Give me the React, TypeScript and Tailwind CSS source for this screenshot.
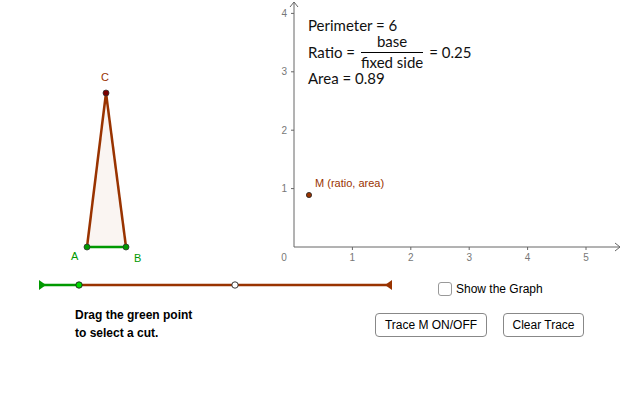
const BROWN = '#993300';
const GREEN = '#009900';
const AXIS = '#666666';

const ox = 294;
const oy = 247;
const unit = 58.4;

function Axes() {
  const xs = [1, 2, 3, 4, 5];
  const ys = [1, 2, 3, 4];
  return (
    <g>
      <line x1={ox} y1={oy} x2={620} y2={oy} stroke={AXIS} strokeWidth={1} />
      <line x1={ox} y1={oy} x2={ox} y2={2} stroke={AXIS} strokeWidth={1} />
      <polyline points="615,243 620,247 615,251" fill="none" stroke={AXIS} strokeWidth={1} />
      <polyline points="290,7 294,2 298,7" fill="none" stroke={AXIS} strokeWidth={1} />
      {xs.map((n) => (
        <g key={`x${n}`}>
          <line x1={ox + n * unit} y1={oy} x2={ox + n * unit} y2={oy + 3} stroke={AXIS} />
          <text x={ox + n * unit} y={261} fontSize={10} fill="#777" textAnchor="middle" fontFamily="Liberation Sans, sans-serif">
            {n}
          </text>
        </g>
      ))}
      {ys.map((n) => (
        <g key={`y${n}`}>
          <line x1={ox - 3} y1={oy - n * unit} x2={ox} y2={oy - n * unit} stroke={AXIS} />
          <text x={287} y={oy - n * unit + 3.5} fontSize={10} fill="#777" textAnchor="end" fontFamily="Liberation Sans, sans-serif">
            {n}
          </text>
        </g>
      ))}
      <text x={284} y={261} fontSize={10} fill="#777" textAnchor="middle" fontFamily="Liberation Sans, sans-serif">
        0
      </text>
    </g>
  );
}

function Triangle() {
  return (
    <g>
      <polygon points="87,247 126,247 106,93" fill={BROWN} fillOpacity={0.05} stroke="none" />
      <line x1={87} y1={247} x2={106} y2={93} stroke={BROWN} strokeWidth={2.5} />
      <line x1={126} y1={247} x2={106} y2={93} stroke={BROWN} strokeWidth={2.5} />
      <line x1={87} y1={247} x2={126} y2={247} stroke={GREEN} strokeWidth={2.5} />
      <circle cx={87} cy={247} r={3} fill={GREEN} stroke="#333" strokeWidth={0.8} />
      <circle cx={126} cy={247} r={3} fill={GREEN} stroke="#333" strokeWidth={0.8} />
      <circle cx={106} cy={93} r={3} fill="#7a0000" stroke="#333" strokeWidth={0.8} />
    </g>
  );
}

function Slider() {
  return (
    <g>
      <line x1={40} y1={285} x2={79} y2={285} stroke={GREEN} strokeWidth={2.5} />
      <line x1={79} y1={285} x2={391} y2={285} stroke={BROWN} strokeWidth={2.5} />
      <polygon points="39,280 46,285 39,290" fill={GREEN} />
      <polygon points="392,280 385,285 392,290" fill={BROWN} />
      <circle cx={79} cy={285} r={3.2} fill="#00dd00" stroke="#222" strokeWidth={0.9} />
      <circle cx={235} cy={285} r={3.2} fill="#ffffff" stroke="#222" strokeWidth={0.9} />
    </g>
  );
}

export default function App() {
  return (
    <div className="relative w-[622px] h-[420px] bg-white overflow-hidden font-['Liberation_Sans',Arial,sans-serif]">
      <svg className="absolute inset-0" width={622} height={420} viewBox="0 0 622 420">
        <Axes />
        <Triangle />
        <Slider />
        <circle cx={309} cy={195} r={2.6} fill={BROWN} stroke="#222" strokeWidth={0.8} />
      </svg>

      {/* point labels */}
      <span className="absolute left-[101px] top-[72px] text-[11px] leading-none text-[#993300]">C</span>
      <span className="absolute left-[71px] top-[251px] text-[11px] leading-none text-[#009900]">A</span>
      <span className="absolute left-[134px] top-[253px] text-[11px] leading-none text-[#009900]">B</span>
      <span className="absolute left-[315px] top-[178px] text-[11px] leading-none text-[#993300]">M (ratio, area)</span>

      {/* formulas */}
      <div className="absolute left-[308px] top-[15px] flex flex-col text-[15px] leading-none text-[#111] font-['Lato',sans-serif]">
        <div className="h-[20px] flex items-center">Perimeter = 6</div>
        <div className="h-[34px] flex items-center gap-[4px]">
          <span>Ratio =</span>
          <span className="flex flex-col items-center px-[2px]">
            <span className="pb-[3px]">base</span>
            <span className="w-full h-px bg-black" />
            <span className="pt-[2px]">fixed side</span>
          </span>
          <span>= 0.25</span>
        </div>
        <div className="h-[18px] flex items-center">Area = 0.89</div>
      </div>

      {/* instructions */}
      <div className="absolute left-[75px] top-[306px] text-[12px] font-bold leading-[18px] text-black">
        <div>Drag the green point</div>
        <div>to select a cut.</div>
      </div>

      {/* checkbox */}
      <label className="absolute left-[438px] top-[280px] flex items-center gap-[4px] text-[12px] text-black">
        <span className="w-[14px] h-[14px] rounded-[3px] border border-[#999] bg-white" />
        <span>Show the Graph</span>
      </label>

      {/* buttons */}
      <div className="absolute left-[375px] top-[313px] flex gap-[16px]">
        <button className="w-[112px] h-[24px] rounded-[4px] border border-[#888] bg-white text-[12px] text-black">
          Trace M ON/OFF
        </button>
        <button className="w-[81px] h-[24px] rounded-[4px] border border-[#888] bg-white text-[12px] text-black">
          Clear Trace
        </button>
      </div>
    </div>
  );
}
